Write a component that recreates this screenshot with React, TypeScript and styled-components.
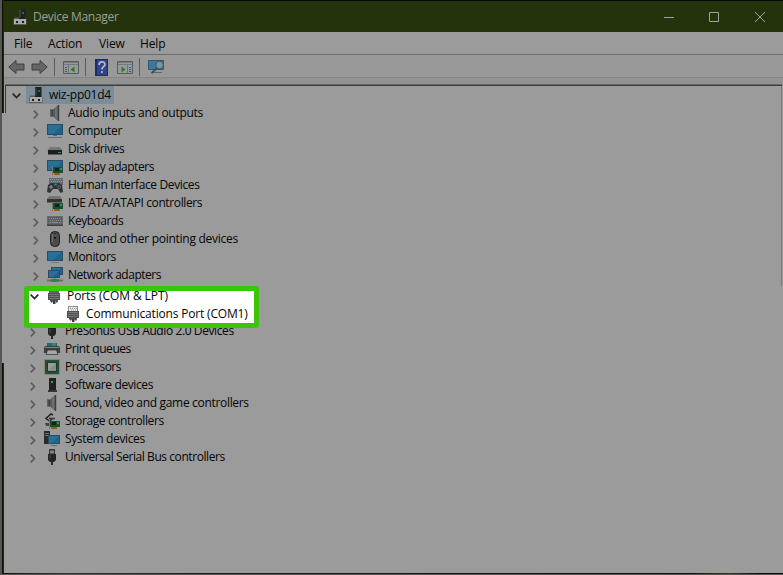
import React from "react";
import styled, { createGlobalStyle } from "styled-components";

const GlobalStyle = createGlobalStyle`
  * { box-sizing: border-box; }
  body { margin: 0; background: #9b9b9b; overflow: hidden; }
`;

const Desktop = styled.div`
  width: 783px;
  height: 575px;
  display: grid;
  grid-template-columns: 2px 2px 1fr;
  background: #9b9b9b;
  font-family: "Open Sans", "Noto Sans", sans-serif;
  font-size: 12px;
  color: #050505;
`;
const Backdrop = styled.div`
  background: #565656;
`;
const Edge = styled.div`
  display: grid;
  grid-template-rows: 113px 250px 211px;
`;
const EdgePart = styled.div<{ $on: boolean }>`
  background: ${(p) => (p.$on ? "linear-gradient(90deg, #0c1408 50%, #1c2a0e 50%)" : "#9b9b9b")};
`;
const Win = styled.div`
  display: flex;
  flex-direction: column;
  min-width: 0;
  border-top: 1px solid #04080a;
`;
const TitleBar = styled.div`
  height: 31px;
  display: flex;
  align-items: center;
  padding-left: 8px;
  background: #24330c;
  color: #9d9f98;
`;
const Title = styled.span`
  flex: 1;
  padding-left: 5px;
  letter-spacing: -0.3px;
`;
const Caption = styled.div`
  width: 45.5px;
  height: 30px;
  display: flex;
  align-items: center;
  justify-content: center;
`;
const MenuBar = styled.div`
  height: 23px;
  display: flex;
  align-items: center;
  padding-left: 10px;
  border-bottom: 1px solid #6b6b6b;
  background: #9b9b9b;
`;
const MenuItem = styled.span<{ $w: number }>`
  width: ${(p) => p.$w}px;
  letter-spacing: -0.15px;
`;
const ToolBar = styled.div`
  height: 23px;
  display: flex;
  align-items: center;
  padding: 2px 0 0 4px;
  border-bottom: 1px solid #868686;
  background: #999;
`;
const Tool = styled.span<{ $gap: number }>`
  display: flex;
  margin-left: ${(p) => p.$gap}px;
`;
const Divider = styled.span<{ $gap: number }>`
  width: 1px;
  height: 18px;
  margin-left: ${(p) => p.$gap}px;
  background: #5c5c5c;
`;
const Frame = styled.div`
  flex: 1;
  display: flex;
  flex-direction: column;
  padding: 6px 1px 0 1px;
  background: linear-gradient(#929292 6px, #9b9b9b 6px);
`;
const TreeTop = styled.div`
  height: 2px;
  border-top: 1px solid #686868;
  border-bottom: 1px solid #3c3c3c;
`;
const TreeRow = styled.div`
  flex: 1;
  display: grid;
  grid-template-columns: 1px 1fr 1px;
`;
const TreeSide = styled.div<{ $h: number; $c: string }>`
  height: ${(p) => p.$h}px;
  background: ${(p) => p.$c};
`;
const Tree = styled.div`
  display: flex;
  flex-direction: column;
`;
const Foot = styled.div`
  height: 2px;
  margin-left: -2px;
  background:
    linear-gradient(transparent 50%, #585858 50%),
    linear-gradient(90deg, #0c140b, #2b3a25 8%, #141f12 25%, #0b1012 88%, #284018 93%, #080b0e 97%);
`;
const Row = styled.div<{ $left: number }>`
  height: 18px;
  flex: none;
  display: flex;
  align-items: center;
  padding-left: ${(p) => p.$left}px;
`;
const Arrow = styled.span<{ $w?: number }>`
  width: ${(p) => p.$w ?? 14}px;
  display: flex;
  padding-top: 2px;
`;
const Glyph = styled.span`
  width: 16px;
  height: 16px;
  display: flex;
`;
const Label = styled.span<{ $ls: number }>`
  padding-left: 5px;
  line-height: 18px;
  white-space: nowrap;
  letter-spacing: ${(p) => p.$ls}px;
`;
const Selected = styled.span`
  height: 18px;
  display: flex;
  align-items: center;
  padding: 0 3px 0 2px;
  background: #7b8d99;
`;
const Spot = styled.div`
  position: relative;
  z-index: 1;
  width: 235px;
  height: 42px;
  flex: none;
  margin: 2px 0 -6px 18px;
  border: 5px solid #3cc40b;
  border-radius: 3px;
  background: #fff;
  overflow: hidden;
`;
const SpotRows = styled.div`
  margin-top: -4px;
`;

const Svg = ({ children }: { children: React.ReactNode }) => (
  <svg width="16" height="16" viewBox="0 0 16 16" fill="none">{children}</svg>
);

const Screen = ({ x = 0, y = 2, w = 16, h = 10 }) => (
  <>
    <rect x={x} y={y} width={w} height={h} fill="#2b4c60" />
    <rect x={x + 1} y={y + 1} width={w - 2} height={h - 2} fill="#1c648f" />
    <path d={`M${x + 1} ${y + 1}h${w - 2}l-${w * 0.55} ${h - 2}h-${w * 0.45 - 2}z`} fill="#3c7c9f" opacity=".45" />
  </>
);
const Card = () => (
  <>
    <rect x="6" y="8" width="10" height="6" fill="#175033" />
    <rect x="8" y="9" width="4" height="3" fill="#0b2417" />
    <path d="M13 9h2v2h-2z" fill="#418a55" />
    <path d="M7 14h6v2H7z" fill="#a06a0b" />
    <path d="M9 14v2M11 14v2" stroke="#5c4310" strokeWidth=".6" />
    <path d="M5.500 7v9" stroke="#777" />
  </>
);
const Board = ({ y = 3, h = 10 }) => (
  <>
    <rect x="0" y={y} width="16" height={h} fill="#3c3f41" />
    <rect x="0" y={y} width="16" height={h - 1.5} fill="#686b6d" />
    <rect x="1" y={y + 1} width="14" height={h - 3.5} fill="#5c5f61" />
    <path d={`M2 ${y + 2.5}h12M3 ${y + 4.5}h11`} stroke="#8e8e8e" strokeDasharray="1 1" />
    <path d={`M2 ${y + 6.5}h2M5 ${y + 6.5}h6M12 ${y + 6.5}h2`} stroke="#8a8a8a" />
  </>
);
const Speaker = () => (
  <Svg>
    <path d="M3 4.500h3.500v7H3z" fill="#3c4043" />
    <path d="M3 4.500h1.500v7H3z" fill="#5c6164" />
    <path d="M6 4.500L11.500 0v16L6 11.500z" fill="#54595d" />
    <path d="M8 3L10.500 1v14L8 13z" fill="#6b7074" />
    <path d="M11.500 0v16" stroke="#3a3e41" strokeWidth="1.400" />
  </Svg>
);
const Plug = ({ bright = false }) => (
  <Svg>
    <path d="M3 0h10v6H3z" fill={bright ? "#8c8c8c" : "#666"} />
    {bright && <path d="M4 1h8v4H4z" fill="#e8e8e8" />}
    {bright && <path d="M5 2.500h7M6 4h5" stroke="#9a9a9a" strokeDasharray="1 1" />}
    <path d="M2 5h12v7h-2v1.500H4V12H2z" fill="#505050" />
    <path d="M3 6.500h10M3 8.500h10M3 10.500h10" stroke="#808080" strokeWidth=".8" />
    <path d="M5 13h1.500v1.500H5zM7 13h2.500v3H7zM10 13h1.500v1.500H10z" fill="#3d3d3d" />
  </Svg>
);
const Usb = ({ head = true }) => (
  <Svg>
    {head && <path d="M5.500.500h5v5h-5z" fill="#5c5c5c" stroke="#333" />}
    {head && <path d="M7 2v2M9 2v2" stroke="#aaa" />}
    <path d="M4 5h8v6l-2 2H6l-2-2z" fill="#242424" />
    <path d="M6 6v4" stroke="#4b4b4b" />
    <path d="M8 12v4" stroke="#2a2a2a" strokeWidth="2" />
  </Svg>
);
const DeviceBox = () => (
  <Svg>
    <path d="M7 0h6.500v10H7z" fill="#1d2123" />
    <path d="M7.500.500h1v8h-1z" fill="#4f5558" />
    <path d="M10 3h2v2h-2z" fill="#37664a" />
    <path d="M2.500 8.500H7V10h6.500V8.500l1 1.500v6h-13v-6z" fill="#5a5a5a" />
    <path d="M2 10h12v5H2z" fill="#a9a9a9" />
    <path d="M4 12h2v2H4zM10 12h2v2h-2z" fill="#1c1c1c" />
  </Svg>
);

const icons: Record<string, React.ReactNode> = {
  device: <DeviceBox />,
  audio: <Speaker />,
  computer: <Svg><Screen y={1} h={11} /><path d="M6 12h4v1H6z" fill="#666" /><path d="M1 14.500h14" stroke="#517186" /></Svg>,
  disk: <Svg><path d="M3 6h10l3 4H0z" fill="#777" /><path d="M1 9h14v4.500H1z" fill="#1d1f1f" /><path d="M11 11.500h3" stroke="#2c9345" /></Svg>,
  display: <Svg><Screen y={1} h={11} /><Card /></Svg>,
  hid: (
    <Svg>
      <path d="M2 1h14v7H2z" fill="#686b6d" />
      <path d="M3 2.500h12M4 4.500h11" stroke="#949494" strokeDasharray="1 1" />
      <path d="M1 8l3-2h8l3 2 1 7-2.500 1-2.500-4H6l-3 4-3-1z" fill="#2f3438" />
      <path d="M4 8v4M2 10h4" stroke="#94999c" />
      <path d="M7 7.500h3" stroke="#3a7399" strokeWidth="2" />
      <path d="M12 8v1.500M12 11v1" stroke="#a36b5c" />
      <path d="M10.500 10h1M13 10h1" stroke="#7fa0b2" />
    </Svg>
  ),
  ide: (
    <Svg>
      <path d="M2 1h11l2 3H0z" fill="#747474" />
      <path d="M0 4h15v3.500H0z" fill="#323536" />
      <Card />
    </Svg>
  ),
  keyboard: <Svg><Board y={3} h={10} /></Svg>,
  mouse: (
    <Svg>
      <rect x="3.500" y=".5" width="9" height="15" rx="4" fill="#484c4f" stroke="#202224" />
      <path d="M5.500 3v8" stroke="#6c7073" />
      <rect x="7" y="2" width="2" height="6" rx="1" fill="#16181a" />
      <path d="M8 3v3" stroke="#8c8c8c" />
    </Svg>
  ),
  monitor: <Svg><Screen y={2} h={10} /><path d="M4 13.500h8" stroke="#747a7d" /></Svg>,
  network: (
    <Svg>
      <Screen x={4} y={0} w={12} h={8} />
      <Screen x={1} y={3} w={12} h={8} />
      <path d="M0 13.500h16" stroke="#65746b" strokeWidth="2" />
      <path d="M4 13.500h8M8 11.500v3.500" stroke="#268545" strokeWidth="2.500" />
    </Svg>
  ),
  port: <Plug />,
  com: <Plug bright />,
  usbDark: <Usb head={false} />,
  printer: (
    <Svg>
      <path d="M3 2h10v4H3z" fill="#276187" /><path d="M8 2h4v3H8z" fill="#378c4d" />
      <path d="M1 5h14l1 2v5H0V7z" fill="#3a3c3d" /><path d="M1 6.500h14" stroke="#858585" />
      <path d="M3.500 9h9l1.500 4.500H2z" fill="#a6a6a6" stroke="#3a3c3d" strokeWidth=".8" />
    </Svg>
  ),
  cpu: (
    <Svg>
      <rect x=".5" y=".5" width="15" height="15" stroke="#7d6c3c" strokeDasharray="1 1" />
      <rect x="1" y="1" width="14" height="14" fill="#214f39" />
      <rect x="3.500" y="3.500" width="9" height="9" fill="#8b8c8a" stroke="#173c2a" />
      <path d="M4 12V4h8z" fill="#9a9b99" />
    </Svg>
  ),
  software: <Svg><path d="M5 1h7v12H5z" fill="#202020" /><path d="M4 13h9v2H4z" fill="#343434" /><path d="M7 4h2v2H7z" fill="#2fae3d" /></Svg>,
  storage: (
    <Svg>
      <path d="M9 2L7 1 2 5.500 5.500 8 8 6" stroke="#252525" strokeWidth="1.500" />
      <path d="M5 5.500h6" stroke="#333" strokeWidth="1.500" />
      <path d="M1 10h5v3H2z" fill="#454545" /><Card />
    </Svg>
  ),
  system: (
    <Svg>
      <path d="M0 0h6v13H0z" fill="#292c2e" /><path d="M1 2.500h4M1 4.500h4" stroke="#6e7375" />
      <Screen x={4} y={4} w={12} h={9} /><path d="M7 14.500h6" stroke="#5b6a73" />
    </Svg>
  ),
  usb: <Usb />,
};

const Chevron = ({ open = false }) =>
  open ? (
    <svg width="9" height="6" viewBox="0 0 9 6" fill="none"><path d="M.7.7l3.800 3.800L8.300.7" stroke="#262626" strokeWidth="1.700" /></svg>
  ) : (
    <svg width="6" height="9" viewBox="0 0 6 9" fill="none"><path d="M.8.7l3.700 3.800L.8 8.300" stroke="#5d5d5d" strokeWidth="1.700" /></svg>
  );

type Item = [icon: string, text: string, tracking: number];
const upper: Item[] = [
  ["audio", "Audio inputs and outputs", -0.29],
  ["computer", "Computer", -0.3],
  ["disk", "Disk drives", -0.4],
  ["display", "Display adapters", -0.46],
  ["hid", "Human Interface Devices", -0.37],
  ["ide", "IDE ATA/ATAPI controllers", -0.38],
  ["keyboard", "Keyboards", -0.46],
  ["mouse", "Mice and other pointing devices", -0.26],
  ["monitor", "Monitors", -0.32],
  ["network", "Network adapters", -0.47],
];
const lower: Item[] = [
  ["usbDark", "PreSonus USB Audio 2.0 Devices", -0.4],
  ["printer", "Print queues", -0.44],
  ["cpu", "Processors", -0.52],
  ["software", "Software devices", -0.38],
  ["audio", "Sound, video and game controllers", -0.32],
  ["storage", "Storage controllers", -0.39],
  ["system", "System devices", -0.36],
  ["usb", "Universal Serial Bus controllers", -0.43],
];

const Node = ({ item, left }: { item: Item; left: number }) => (
  <Row $left={left}>
    <Arrow><Chevron /></Arrow>
    <Glyph>{icons[item[0]]}</Glyph>
    <Label $ls={item[2]}>{item[1]}</Label>
  </Row>
);

const BackArrow = ({ flip = false }) => (
  <svg width="17" height="16" viewBox="0 0 17 16">
    <path transform={flip ? "matrix(-1 0 0 1 17 0)" : undefined} d="M.8 8L8 1.500V5h8v6H8v3.500z" fill="#666" stroke="#3f3f3f" />
  </svg>
);
const Panel = ({ right = false }) => (
  <svg width="16" height="16" viewBox="0 0 16 16" fill="none">
    <path d="M.5 2.500h15v12H.5z" fill="#999" stroke="#555d63" />
    <path d="M1 3.500h14M1 5.500h14" stroke="#747b80" />
    <path d={right ? "M10.500 6v8" : "M5.500 6v8"} stroke="#6d7479" />
    <path d={right ? "M12 8.500h2M12 10.500h2M12 12.500h2" : "M2 8.500h2M2 10.500h2M2 12.500h2"} stroke="#375e80" />
    <path d={right ? "M4.500 7.500v6l4-3z" : "M11.500 7.500v6l-4-3z"} fill="#24801f" />
  </svg>
);

export default function App() {
  return (
    <Desktop>
      <GlobalStyle />
      <Backdrop />
      <Edge><EdgePart $on /><EdgePart $on={false} /><EdgePart $on /></Edge>
      <Win>
        <TitleBar>
          <Glyph>{icons.device}</Glyph>
          <Title>Device Manager</Title>
          <Caption><svg width="10" height="10"><path d="M0 5.500h10" stroke="#a0a29b" /></svg></Caption>
          <Caption><svg width="11" height="10" fill="none"><path d="M.5.500h9v9h-9z" stroke="#a0a29b" /></svg></Caption>
          <Caption><svg width="10" height="10"><path d="M0 0l10 10M10 0L0 10" stroke="#a0a29b" /></svg></Caption>
        </TitleBar>
        <MenuBar>
          <MenuItem $w={34}>File</MenuItem>
          <MenuItem $w={51}>Action</MenuItem>
          <MenuItem $w={41}>View</MenuItem>
          <MenuItem $w={40}>Help</MenuItem>
        </MenuBar>
        <ToolBar>
          <Tool $gap={0}><BackArrow /></Tool>
          <Tool $gap={6}><BackArrow flip /></Tool>
          <Divider $gap={6} />
          <Tool $gap={8}><Panel /></Tool>
          <Divider $gap={6} />
          <Tool $gap={9}>
            <svg width="13" height="17" viewBox="0 0 13 17" fill="none">
              <path d="M0 0h13v17H0z" fill="#1c2a68" /><path d="M2 1h10v15H2z" fill="#31448a" />
              <path d="M4 6c0-4 6-4 6-.500 0 2-3 2-3 5M7 12v2" stroke="#b5b8c6" strokeWidth="1.700" />
            </svg>
          </Tool>
          <Tool $gap={9}><Panel right /></Tool>
          <Divider $gap={6} />
          <Tool $gap={8}>
            <svg width="17" height="16" viewBox="0 0 17 16" fill="none">
              <path d="M.5 1.500h15v9H.5z" fill="#387b9c" stroke="#3b5666" />
              <path d="M5 13.500h9" stroke="#536a78" />
              <circle cx="11.500" cy="6" r="3.800" fill="#6f99ad" stroke="#485158" />
              <path d="M8.700 9L3.500 14.300" stroke="#434d53" strokeWidth="1.800" />
            </svg>
          </Tool>
        </ToolBar>
        <Frame>
          <TreeTop />
          <TreeRow>
            <TreeSide $h={27} $c="#3c3c3c" />
            <Tree>
              <Row $left={6}>
                <Arrow><Chevron open /></Arrow>
                <Selected><Glyph>{icons.device}</Glyph><Label $ls={-0.25}>wiz-pp01d4</Label></Selected>
              </Row>
              {upper.map((i) => <Node key={i[1]} item={i} left={27} />)}
              <Spot>
                <SpotRows>
                  <Row $left={1}>
                    <Arrow $w={16}><Chevron open /></Arrow>
                    <Glyph>{icons.port}</Glyph><Label $ls={-0.08}>Ports (COM &amp; LPT)</Label>
                  </Row>
                  <Row $left={36}><Glyph>{icons.com}</Glyph><Label $ls={-0.18}>Communications Port (COM1)</Label></Row>
                </SpotRows>
              </Spot>
              {lower.map((i) => <Node key={i[1]} item={i} left={24} />)}
            </Tree>
            <TreeSide $h={200} $c="#7b7b7b" />
          </TreeRow>
        </Frame>
        <Foot />
      </Win>
    </Desktop>
  );
}
